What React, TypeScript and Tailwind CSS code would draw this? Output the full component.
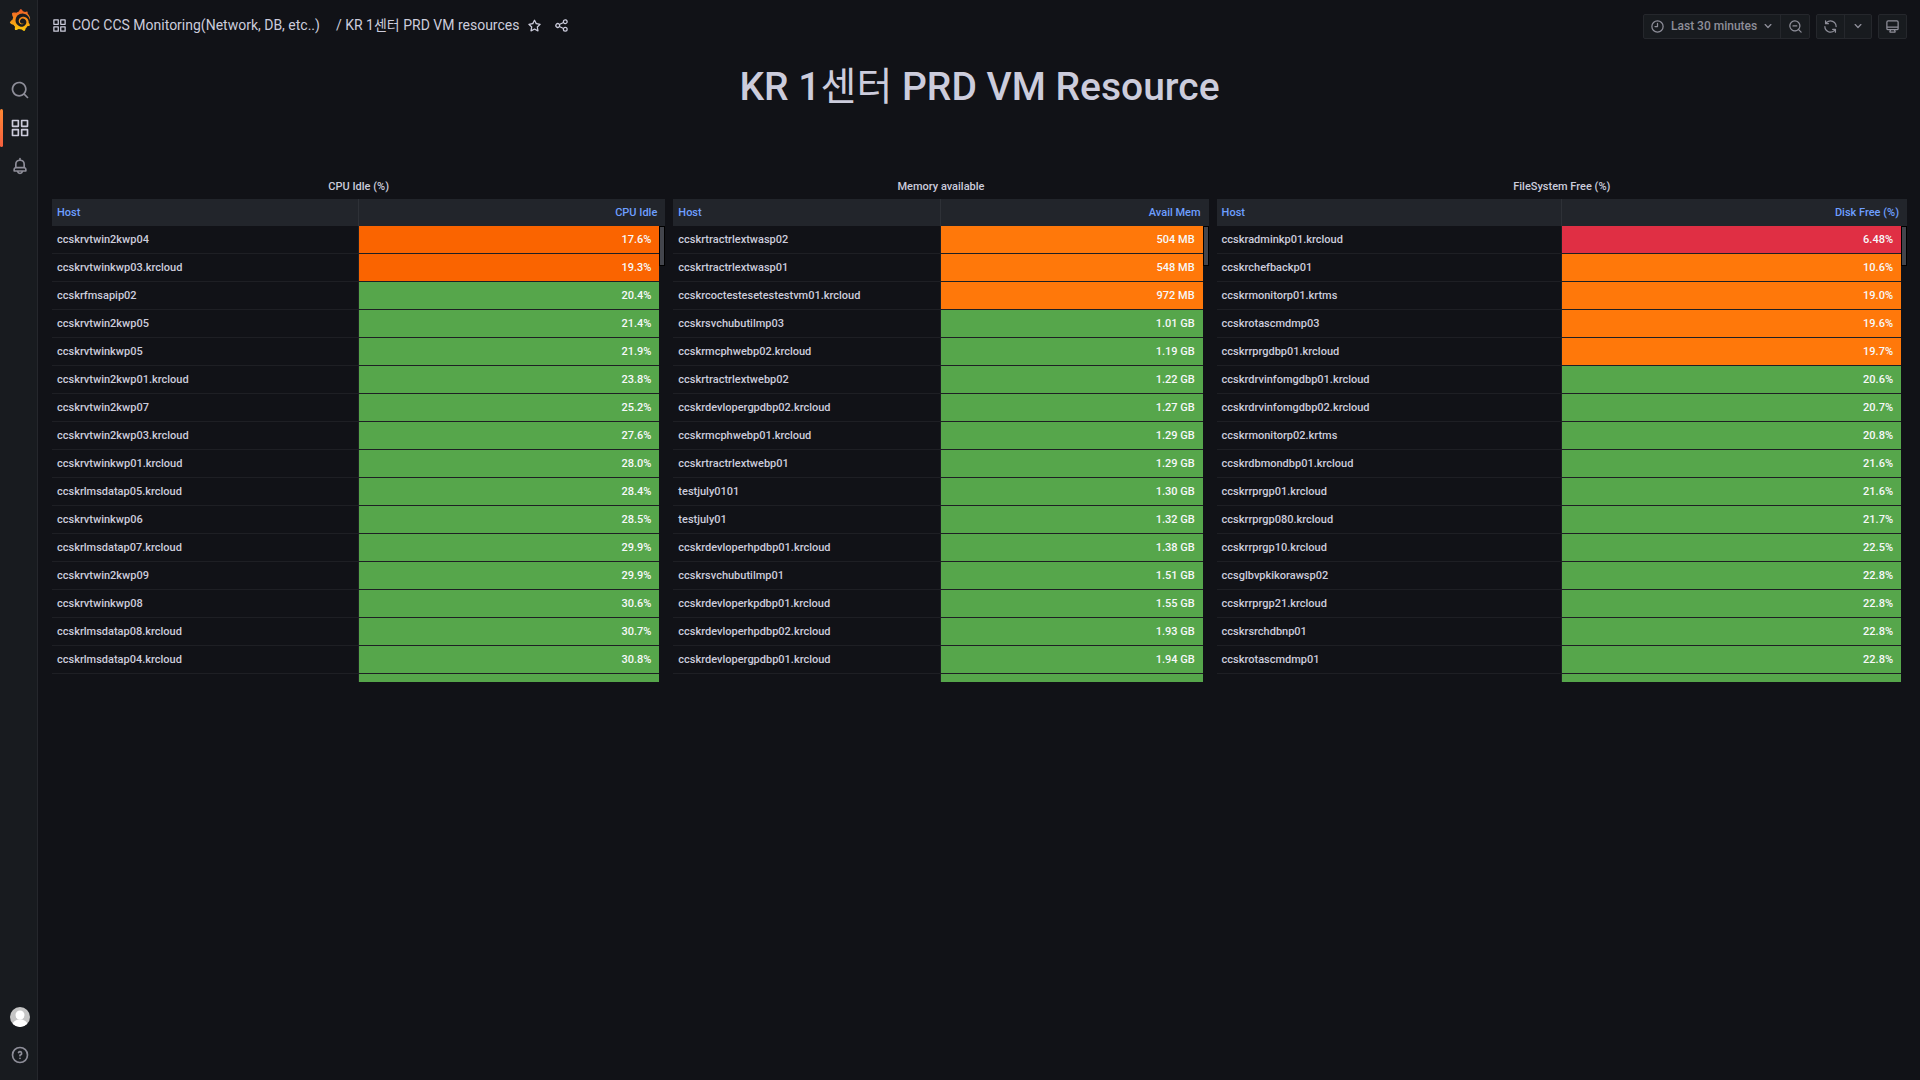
import React from "react";
import { SiGrafana } from "react-icons/si";

const ICONS = {
  apps: "M10,13H3a1,1,0,0,0-1,1v7a1,1,0,0,0,1,1h7a1,1,0,0,0,1-1V14A1,1,0,0,0,10,13ZM9,20H4V15H9ZM21,2H14a1,1,0,0,0-1,1v7a1,1,0,0,0,1,1h7a1,1,0,0,0,1-1V3A1,1,0,0,0,21,2ZM20,9H15V4h5Zm1,4H14a1,1,0,0,0-1,1v7a1,1,0,0,0,1,1h7a1,1,0,0,0,1-1V14A1,1,0,0,0,21,13Zm-1,7H15V15h5ZM10,2H3A1,1,0,0,0,2,3v7a1,1,0,0,0,1,1h7a1,1,0,0,0,1-1V3A1,1,0,0,0,10,2ZM9,9H4V4H9Z",
  search:
    "M21.71,20.29,18,16.61A9,9,0,1,0,16.61,18l3.68,3.68a1,1,0,0,0,1.42,0A1,1,0,0,0,21.71,20.29ZM11,18a7,7,0,1,1,7-7A7,7,0,0,1,11,18Z",
  searchMinus:
    "M21.71,20.29,18,16.61A9,9,0,1,0,16.61,18l3.68,3.68a1,1,0,0,0,1.42,0A1,1,0,0,0,21.71,20.29ZM11,18a7,7,0,1,1,7-7A7,7,0,0,1,11,18ZM14,10H8a1,1,0,0,0,0,2h6a1,1,0,0,0,0-2Z",
  bell: "M18,13.18V10a6,6,0,0,0-5-5.91V3a1,1,0,0,0-2,0V4.09A6,6,0,0,0,6,10v3.18A3,3,0,0,0,4,16v2a1,1,0,0,0,1,1H8.14a4,4,0,0,0,7.72,0H19a1,1,0,0,0,1-1V16A3,3,0,0,0,18,13.18ZM8,10a4,4,0,0,1,8,0v3H8Zm4,10a2,2,0,0,1-1.72-1h3.44A2,2,0,0,1,12,20Zm6-3H6V16a1,1,0,0,1,1-1H17a1,1,0,0,1,1,1Z",
  star: "M22,9.67A1,1,0,0,0,21.14,9l-5.69-.83L12.9,3a1,1,0,0,0-1.8,0L8.55,8.16,2.86,9a1,1,0,0,0-.81.68,1,1,0,0,0,.25,1l4.13,4-1,5.68A1,1,0,0,0,6.9,21.44L12,18.77l5.1,2.67a.93.93,0,0,0,.46.12,1,1,0,0,0,.59-.19,1,1,0,0,0,.4-1l-1-5.68,4.13-4A1,1,0,0,0,22,9.67Zm-6.15,4a1,1,0,0,0-.29.88l.72,4.2-3.76-2a1.06,1.06,0,0,0-.94,0l-3.76,2,.72-4.2a1,1,0,0,0-.29-.88l-3-3,4.21-.61a1,1,0,0,0,.76-.55L12,5.7l1.88,3.82a1,1,0,0,0,.76.55l4.21.61Z",
  share:
    "M18,14a4,4,0,0,0-3.08,1.48l-5.1-2.35a3.64,3.64,0,0,0,0-2.26l5.1-2.35A4,4,0,1,0,14,6a4.17,4.17,0,0,0,.07.71L8.79,9.14a4,4,0,1,0,0,5.72l5.28,2.43A4.17,4.17,0,0,0,14,18a4,4,0,1,0,4-4ZM18,4a2,2,0,1,1-2,2A2,2,0,0,1,18,4ZM6,14a2,2,0,1,1,2-2A2,2,0,0,1,6,14Zm12,6a2,2,0,1,1,2-2A2,2,0,0,1,18,20Z",
  clock:
    "M12,6a1,1,0,0,0-1,1v4H8a1,1,0,0,0,0,2h4a1,1,0,0,0,1-1V7A1,1,0,0,0,12,6Zm0-4A10,10,0,1,0,22,12,10,10,0,0,0,12,2Zm0,18a8,8,0,1,1,8-8A8,8,0,0,1,12,20Z",
  down: "M17,9.17a1,1,0,0,0-1.41,0L12,12.71,8.46,9.17a1,1,0,0,0-1.41,0,1,1,0,0,0,0,1.42l4.24,4.24a1,1,0,0,0,1.42,0L17,10.59A1,1,0,0,0,17,9.17Z",
  sync: "M19.91,15.51H15.38a1,1,0,0,0,0,2h2.4A8,8,0,0,1,4,12a1,1,0,0,0-2,0,10,10,0,0,0,16.88,7.23V21a1,1,0,0,0,2,0V16.5A1,1,0,0,0,19.91,15.51ZM12,2A10,10,0,0,0,5.12,4.77V3a1,1,0,0,0-2,0V7.5a1,1,0,0,0,1,1h4.5a1,1,0,0,0,0-2H6.22A8,8,0,0,1,20,12a1,1,0,0,0,2,0A10,10,0,0,0,12,2Z",
  monitor:
    "M19,2H5A3,3,0,0,0,2,5V15a3,3,0,0,0,3,3H7.64l-.58,1a2,2,0,0,0,0,2,2,2,0,0,0,1.75,1h6.46A2,2,0,0,0,17,21a2,2,0,0,0,0-2l-.59-1H19a3,3,0,0,0,3-3V5A3,3,0,0,0,19,2ZM8.77,20,10,18H14l1.2,2ZM20,15a1,1,0,0,1-1,1H5a1,1,0,0,1-1-1V14H20Zm0-3H4V5A1,1,0,0,1,5,4H19a1,1,0,0,1,1,1Z",
  help: "M11.29,15.29a1.58,1.58,0,0,0-.12.15.76.76,0,0,0-.09.18.64.64,0,0,0-.06.18,1.36,1.36,0,0,0,0,.2.84.84,0,0,0,.08.38.9.9,0,0,0,.54.54.94.94,0,0,0,.76,0,.9.9,0,0,0,.54-.54A1,1,0,0,0,13,16a1,1,0,0,0-.29-.71A1,1,0,0,0,11.29,15.29ZM12,2A10,10,0,1,0,22,12,10,10,0,0,0,12,2Zm0,18a8,8,0,1,1,8-8A8,8,0,0,1,12,20ZM12,7A3,3,0,0,0,9.4,8.5a1,1,0,1,0,1.73,1A1,1,0,0,1,12,9a1,1,0,0,1,0,2,1,1,0,0,0-1,1v1a1,1,0,0,0,2,0v-.18A3,3,0,0,0,12,7Z",
};

function Icon({ name, className = "size-4" }: { name: keyof typeof ICONS; className?: string }) {
  return (
    <svg viewBox="0 0 24 24" fill="currentColor" aria-hidden="true" className={className}>
      <path d={ICONS[name]} />
    </svg>
  );
}

type Tone = "red" | "deep" | "orange" | "green";
type Row = [host: string, value: string, tone?: Tone];

const TONES: Record<Tone, string> = {
  red: "bg-[#e02f44]",
  deep: "bg-[#fa6400]",
  orange: "bg-[#ff780a]",
  green: "bg-[#56a64b]",
};

const CPU: Row[] = [
  ["ccskrvtwin2kwp04", "17.6%", "deep"],
  ["ccskrvtwinkwp03.krcloud", "19.3%", "deep"],
  ["ccskrfmsapip02", "20.4%"],
  ["ccskrvtwin2kwp05", "21.4%"],
  ["ccskrvtwinkwp05", "21.9%"],
  ["ccskrvtwin2kwp01.krcloud", "23.8%"],
  ["ccskrvtwin2kwp07", "25.2%"],
  ["ccskrvtwin2kwp03.krcloud", "27.6%"],
  ["ccskrvtwinkwp01.krcloud", "28.0%"],
  ["ccskrlmsdatap05.krcloud", "28.4%"],
  ["ccskrvtwinkwp06", "28.5%"],
  ["ccskrlmsdatap07.krcloud", "29.9%"],
  ["ccskrvtwin2kwp09", "29.9%"],
  ["ccskrvtwinkwp08", "30.6%"],
  ["ccskrlmsdatap08.krcloud", "30.7%"],
  ["ccskrlmsdatap04.krcloud", "30.8%"],
];

const MEMORY: Row[] = [
  ["ccskrtractrlextwasp02", "504 MB", "orange"],
  ["ccskrtractrlextwasp01", "548 MB", "orange"],
  ["ccskrcoctestesetestestvm01.krcloud", "972 MB", "orange"],
  ["ccskrsvchubutilmp03", "1.01 GB"],
  ["ccskrmcphwebp02.krcloud", "1.19 GB"],
  ["ccskrtractrlextwebp02", "1.22 GB"],
  ["ccskrdevlopergpdbp02.krcloud", "1.27 GB"],
  ["ccskrmcphwebp01.krcloud", "1.29 GB"],
  ["ccskrtractrlextwebp01", "1.29 GB"],
  ["testjuly0101", "1.30 GB"],
  ["testjuly01", "1.32 GB"],
  ["ccskrdevloperhpdbp01.krcloud", "1.38 GB"],
  ["ccskrsvchubutilmp01", "1.51 GB"],
  ["ccskrdevloperkpdbp01.krcloud", "1.55 GB"],
  ["ccskrdevloperhpdbp02.krcloud", "1.93 GB"],
  ["ccskrdevlopergpdbp01.krcloud", "1.94 GB"],
];

const DISK: Row[] = [
  ["ccskradminkp01.krcloud", "6.48%", "red"],
  ["ccskrchefbackp01", "10.6%", "orange"],
  ["ccskrmonitorp01.krtms", "19.0%", "orange"],
  ["ccskrotascmdmp03", "19.6%", "orange"],
  ["ccskrrprgdbp01.krcloud", "19.7%", "orange"],
  ["ccskrdrvinfomgdbp01.krcloud", "20.6%"],
  ["ccskrdrvinfomgdbp02.krcloud", "20.7%"],
  ["ccskrmonitorp02.krtms", "20.8%"],
  ["ccskrdbmondbp01.krcloud", "21.6%"],
  ["ccskrrprgp01.krcloud", "21.6%"],
  ["ccskrrprgp080.krcloud", "21.7%"],
  ["ccskrrprgp10.krcloud", "22.5%"],
  ["ccsglbvpkikorawsp02", "22.8%"],
  ["ccskrrprgp21.krcloud", "22.8%"],
  ["ccskrsrchdbnp01", "22.8%"],
  ["ccskrotascmdmp01", "22.8%"],
];

function Panel({ title, column, rows }: { title: string; column: string; rows: Row[] }) {
  return (
    <section className="min-w-0">
      <h2 className="flex h-[27px] items-center justify-center pt-1 text-[11px] font-medium">{title}</h2>
      <div className="relative">
        <table className="w-full table-fixed border-separate border-spacing-0 text-[11px] font-medium">
          <colgroup>
            <col className="w-1/2" />
            <col />
            <col className="w-[6px]" />
          </colgroup>
          <thead>
            <tr className="h-[27px] bg-[#22252b] text-[#6e9fff]">
              <th scope="col" className="border-r border-[#2e3137] px-[5px] pt-0.5 pb-0 text-left font-medium">
                Host
              </th>
              <th scope="col" colSpan={2} className="px-2 pt-0.5 pb-0 text-right font-medium">
                {column}
              </th>
            </tr>
          </thead>
          <tbody>
            {rows.map(([host, value, tone = "green"]) => (
              <tr key={host} className="h-7">
                <td className="truncate border-r border-b border-[#1e1f24] px-[5px] pt-0.5 pb-0">{host}</td>
                <td className={`border-b border-[#1e1f24] px-2 pt-0.5 pb-0 text-right text-[#f7f8fa] ${TONES[tone]}`}>
                  {value}
                </td>
                <td className="p-0" />
              </tr>
            ))}
            <tr className="h-2">
              <td className="border-r border-[#1e1f24] p-0" />
              <td className="bg-[#56a64b] p-0" />
              <td className="p-0" />
            </tr>
          </tbody>
        </table>
        <div className="absolute top-[27px] right-0 h-10 w-[6px] border border-black bg-[#43454c]" />
      </div>
    </section>
  );
}

function NavItem({ label, active = false, children }: { label: string; active?: boolean; children: React.ReactNode }) {
  return (
    <a
      href="#"
      aria-label={label}
      className={`relative flex h-[38px] items-center justify-center pl-0.5 ${active ? "text-[#ccccdc]" : "text-[#8e8e99]"}`}
    >
      {active && <span className="absolute inset-y-0 left-0 w-[3px] rounded-xs bg-linear-to-b from-[#ff8833] to-[#f55f3e]" />}
      {children}
    </a>
  );
}

function Sidebar() {
  return (
    <nav className="flex w-[38px] shrink-0 flex-col border-r border-[#25272c] bg-[#181b1f] pb-[6px]">
      <a href="#" aria-label="Home" className="mb-[31px] flex h-10 items-center justify-center pl-0.5">
        <svg className="absolute size-0" aria-hidden="true">
          <linearGradient id="brand" x1="0" y1="0" x2="0" y2="1">
            <stop offset="0" stopColor="#f05a28" />
            <stop offset="1" stopColor="#fbca0a" />
          </linearGradient>
        </svg>
        <SiGrafana className="size-[22px]" fill="url(#brand)" />
      </a>
      <NavItem label="Search">
        <Icon name="search" className="size-5" />
      </NavItem>
      <NavItem label="Dashboards" active>
        <Icon name="apps" className="size-5" />
      </NavItem>
      <NavItem label="Alerting">
        <Icon name="bell" className="size-5" />
      </NavItem>
      <div className="mt-auto">
        <NavItem label="Profile">
          <svg viewBox="0 0 20 20" className="size-5 rounded-full" aria-hidden="true">
            <rect width="20" height="20" fill="#c5c5c5" />
            <circle cx="10" cy="8" r="4.5" fill="#fff" />
            <ellipse cx="10" cy="18" rx="7.5" ry="5.8" fill="#fff" />
          </svg>
        </NavItem>
        <NavItem label="Help">
          <Icon name="help" className="size-5" />
        </NavItem>
      </div>
    </nav>
  );
}

const GROUP = "flex h-[25px] divide-x divide-[#25272c] rounded-xs border border-[#25272c] bg-[#181b1f]";

function Toolbar() {
  return (
    <div className="flex items-center gap-[6px] pt-0.5 text-[#8e8e99]">
      <div className={GROUP}>
        <button type="button" className="flex w-[137px] items-center pl-[6px] text-[12px] font-medium">
          <Icon name="clock" className="mr-[6px] size-[15px]" />
          Last 30 minutes
          <Icon name="down" className="mr-1 ml-auto size-4" />
        </button>
        <button type="button" aria-label="Zoom out" className="flex w-7 items-center justify-center">
          <Icon name="searchMinus" className="size-[15px]" />
        </button>
      </div>
      <div className={GROUP}>
        <button type="button" aria-label="Refresh" className="flex w-7 items-center justify-center">
          <Icon name="sync" className="size-[15px]" />
        </button>
        <button type="button" aria-label="Refresh interval" className="flex w-[26px] items-center justify-center">
          <Icon name="down" />
        </button>
      </div>
      <div className={GROUP}>
        <button type="button" aria-label="Cycle view mode" className="flex w-[27px] items-center justify-center">
          <Icon name="monitor" className="size-[15px]" />
        </button>
      </div>
    </div>
  );
}

export default function App() {
  return (
    <div className="flex min-h-screen bg-[#111217] font-[Roboto,'Noto_Sans_CJK_KR',sans-serif] text-[#ccccdc]">
      <Sidebar />
      <main className="flex min-w-0 flex-1 flex-col pr-[13px] pl-[14px]">
        <header className="flex h-[50px] items-center justify-between">
          <div className="flex items-center">
            <Icon name="apps" className="mr-[5px] size-[15px]" />
            <div className="flex gap-4 text-[14px] leading-5">
              <a href="#">COC CCS Monitoring(Network, DB, etc..)</a>
              <a href="#">/ KR 1센터 PRD VM resources</a>
            </div>
            <button type="button" aria-label="Mark as favorite" className="ml-2">
              <Icon name="star" className="size-[15px]" />
            </button>
            <button type="button" aria-label="Share dashboard" className="ml-3">
              <Icon name="share" className="size-[15px]" />
            </button>
          </div>
          <Toolbar />
        </header>
        <h1 className="mt-[13px] mb-[61px] text-center text-[39px] leading-[48px] font-medium">
          KR 1<span className="font-normal">센터</span> PRD VM Resource
        </h1>
        <div className="grid grid-cols-[613fr_535fr_690fr] gap-2">
          <Panel title="CPU Idle (%)" column="CPU Idle" rows={CPU} />
          <Panel title="Memory available" column="Avail Mem" rows={MEMORY} />
          <Panel title="FileSystem Free (%)" column="Disk Free (%)" rows={DISK} />
        </div>
      </main>
    </div>
  );
}
